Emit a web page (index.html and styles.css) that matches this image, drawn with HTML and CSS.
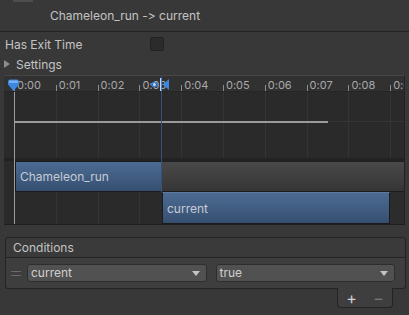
FILE: index.html
```html
<!DOCTYPE html>
<html lang="en">
<head>
 <meta charset="UTF-8">
 <title>Transition</title>
 <link rel="stylesheet" href="styles.css">
</head>
<body>
 <div class="header">
   <div class="icon-tab"></div>
   <span class="title">Chameleon_run -&gt; current</span>
 </div>

 <div class="field-row exit-row">
   <span class="field-label">Has Exit Time</span>
   <span class="checkbox"></span>
 </div>
 <div class="field-row fold-row">
   <span class="fold-arrow"></span>
   <span>Settings</span>
 </div>

 <div class="timeline">
   <div class="ruler">
     <span class="tick">0:00</span>
     <span class="tick">0:01</span>
     <span class="tick">0:02</span>
     <span class="tick">0:03</span>
     <span class="tick">0:04</span>
     <span class="tick">0:05</span>
     <span class="tick">0:06</span>
     <span class="tick">0:07</span>
     <span class="tick">0:08</span>
     <span class="tick">0:09</span>
   </div>
   <div class="curve-area"></div>
   <div class="track-gap"></div>
   <div class="track track-from">
     <div class="clip clip-from">Chameleon_run</div>
     <div class="clip-rest"></div>
   </div>
   <div class="track track-to">
     <div class="clip clip-to">current</div>
     <div class="track-end"></div>
   </div>

   <!-- things drawn on the timeline canvas -->
   <div class="curve-line"></div>
   <div class="curve-fade"></div>
   <div class="playhead"></div>
   <div class="trans-line"></div>
   <svg class="play-marker" width="13" height="13" viewBox="0 0 13 13">
     <path d="M1 2.5 Q1 0.5 3 0.5 H10 Q12 0.5 12 2.5 V5.5 L6.5 12 L1 5.5 Z" fill="#3a86e0"/>
     <path d="M2 2.5 Q2 1.5 3 1.5 H10 Q11 1.5 11 2.5 V4 H2 Z" fill="#78b0f2"/>
   </svg>
   <svg class="trans-marker" width="22" height="13" viewBox="0 0 22 13">
     <path d="M2 6.5 Q5.5 2.5 9 6.5 Q5.5 10.5 2 6.5 Z" fill="none" stroke="#3a86e0" stroke-width="1.4"/>
     <circle cx="5.5" cy="6.5" r="1.3" fill="#e0e8f4"/>
     <rect x="11" y="0" width="1" height="13" fill="#c9d4e2"/>
     <rect x="12" y="0" width="1" height="13" fill="#3a86e0"/>
     <path d="M14 6.5 L20 1 V12 Z" fill="#3a86e0"/>
   </svg>
 </div>

 <div class="conditions">
   <div class="cond-header">Conditions</div>
   <div class="cond-body">
     <span class="drag-handle"></span>
     <div class="dropdown dd-param">current<span class="dd-arrow"></span></div>
     <div class="dropdown dd-value">true<span class="dd-arrow"></span></div>
   </div>
   <div class="cond-footer">
     <span class="btn-add">+</span>
     <span class="btn-remove">&minus;</span>
   </div>
 </div>
</body>
</html>
```

FILE: styles.css
```css
body {
  margin: 0;
  width: 409px;
  height: 315px;
  overflow: hidden;
  background-color: #383838;
  font-family: Inter, "Noto Sans", sans-serif;
  font-size: 12px;
  font-feature-settings: "calt" 0, "liga" 0;
  color: #c4c4c4;
}

.header {
  position: relative;
  display: flex;
  align-items: center;
  height: 31px;
  padding-left: 50px;
  border-bottom: 1px solid #232323;
}

.icon-tab {
  position: absolute;
  left: 13px;
  top: 0;
  width: 20px;
  height: 2px;
  background-color: #4d4d4d;
}

.field-row {
  display: flex;
  align-items: center;
  height: 20px;
  padding-left: 5px;
}

.exit-row {
  margin-top: 2px;
}

.field-label {
  width: 145px;
}

.checkbox {
  width: 12px;
  height: 12px;
  border: 1px solid #222;
  border-radius: 2px;
  background-color: #2b2b2b;
}

.fold-row {
  padding-left: 4px;
}

.fold-arrow {
  width: 0;
  height: 0;
  border-top: 4px solid transparent;
  border-bottom: 4px solid transparent;
  border-left: 6px solid #8c8c8c;
  margin-right: 6px;
}

/* timeline */
.timeline {
  position: relative;
  margin: 1px 4px 0 4px;
  border-top: 1px solid #464646;
  border-right: 1px solid #222;
  border-bottom: 1px solid #1e1e1e;
  background-color: #2a2a2a;
  overflow: hidden;
}

.ruler {
  display: flex;
  height: 16px;
  padding-left: 10px;
  background-color: #313131;
  border-bottom: 1px solid #262626;
  box-sizing: border-box;
  overflow: hidden;
}

.tick {
  position: relative;
  flex: 0 0 41.8px;
  padding: 1px 0 0 3px;
  box-sizing: border-box;
  font-size: 11px;
  line-height: 16px;
  color: #a9a9a9;
  white-space: nowrap;
  overflow: hidden;
}

.tick::before {
  content: "";
  position: absolute;
  left: 0;
  bottom: 0;
  width: 1px;
  height: 6px;
  background-color: #8e8e8e;
}

.curve-area,
.track-to {
  background-image: repeating-linear-gradient(90deg, #343434 0 1px, transparent 1px 41.8px);
  background-position: 10px 0;
}

.curve-area {
  height: 66px;
}

.track-gap {
  height: 3px;
  background-color: #222;
}

.track {
  display: flex;
}

.track-from {
  height: 31px;
  padding-left: 11px;
}

.track-to {
  height: 32px;
  padding-left: 158px;
}

.clip {
  display: flex;
  align-items: center;
  padding-left: 4px;
  box-sizing: border-box;
  background: linear-gradient(#4c6b93, #364f70);
  border: 1px solid #1b1b1b;
  color: #c5ccd6;
}

.clip-from {
  width: 146px;
  border-right: none;
}

.clip-to {
  width: 228px;
  border-top-color: #5b7aa3;
}

.clip-rest {
  flex: 1;
  background: linear-gradient(#494949, #353535);
  border-top: 1px solid #222;
  border-bottom: 1px solid #1b1b1b;
}

.track-end {
  flex: 1;
  background-color: #2c2c2c;
}

.curve-line {
  position: absolute;
  left: 10px;
  top: 45px;
  width: 314px;
  height: 2px;
  background-color: #9a9a9a;
}

.curve-fade {
  position: absolute;
  left: 324px;
  right: 0;
  top: 45px;
  height: 1px;
  background-color: #363636;
}

.playhead {
  position: absolute;
  left: 10px;
  top: 16px;
  bottom: 0;
  width: 1px;
  background-color: #9c9c9c;
}

.trans-line {
  position: absolute;
  left: 157px;
  top: 0;
  height: 116px;
  width: 1px;
  background-color: #34527b;
}

.play-marker {
  position: absolute;
  left: 3px;
  top: 3px;
}

.trans-marker {
  position: absolute;
  left: 145px;
  top: 2px;
}

/* conditions list */
.conditions {
  margin: 12px 3px 0 5px;
}

.cond-header {
  height: 19px;
  line-height: 19px;
  padding-left: 7px;
  background-color: #3a3a3a;
  border: 1px solid #242424;
  border-radius: 3px 3px 0 0;
  color: #c4c4c4;
}

.cond-body {
  display: flex;
  align-items: center;
  gap: 9px;
  height: 30px;
  padding: 0 10px 0 4px;
  background-color: #3e3e3e;
  border: 1px solid #242424;
  border-top: none;
  border-radius: 0 0 3px 3px;
}

.drag-handle {
  width: 10px;
  height: 3px;
  margin-left: 1px;
  margin-right: -3px;
  border-top: 1px solid #6a6a6a;
  border-bottom: 1px solid #6a6a6a;
}

.dropdown {
  position: relative;
  flex: 1;
  height: 16px;
  line-height: 16px;
  padding-left: 3px;
  background-color: #515151;
  border: 1px solid #2e2e2e;
  border-radius: 3px;
  color: #d0d0d0;
}

.dd-arrow {
  position: absolute;
  right: 6px;
  top: 6px;
  width: 0;
  height: 0;
  border-left: 4px solid transparent;
  border-right: 4px solid transparent;
  border-top: 5px solid #c4c4c4;
}

.cond-footer {
  display: flex;
  justify-content: space-around;
  align-items: center;
  width: 54px;
  height: 19px;
  margin: -1px 13px 0 auto;
  background-color: #3e3e3e;
  border: 1px solid #242424;
  border-top: none;
  border-radius: 0 0 4px 4px;
  font-size: 16px;
}

.btn-add {
  color: #d0d0d0;
}

.btn-remove {
  color: #777;
}
```
